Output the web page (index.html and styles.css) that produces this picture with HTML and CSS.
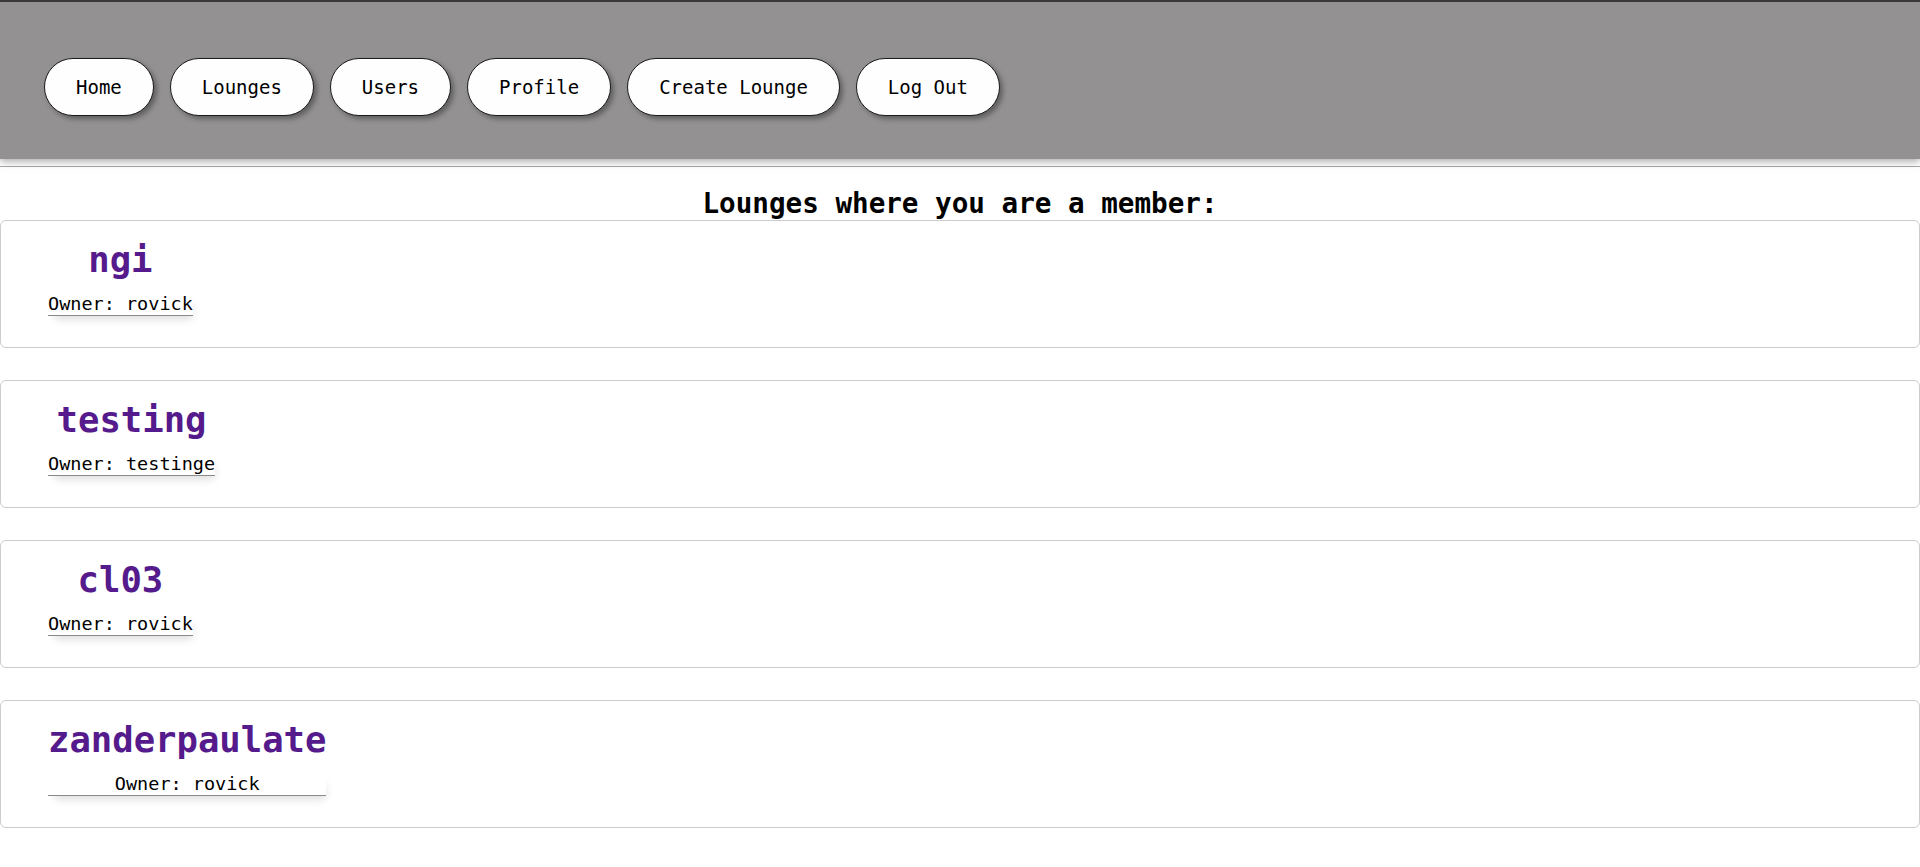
FILE: index.html
```html
<!DOCTYPE html>
<html lang="en">
<head>
<meta charset="utf-8">
<title>Lounges</title>
<link rel="stylesheet" href="styles.css">
</head>
<body>
<header class="topbar">
  <nav class="nav">
    <a class="nav-btn" href="#">Home</a>
    <a class="nav-btn" href="#">Lounges</a>
    <a class="nav-btn" href="#">Users</a>
    <a class="nav-btn" href="#">Profile</a>
    <a class="nav-btn" href="#">Create Lounge</a>
    <a class="nav-btn" href="#">Log Out</a>
  </nav>
</header>
<div class="divider"></div>
<main class="content">
  <h2 class="page-title">Lounges where you are a member:</h2>
  <section class="card">
    <div class="lounge">
      <a class="lounge-name" href="#">ngi</a>
      <div class="owner">Owner: rovick</div>
    </div>
  </section>
  <section class="card">
    <div class="lounge">
      <a class="lounge-name" href="#">testing</a>
      <div class="owner">Owner: testinge</div>
    </div>
  </section>
  <section class="card">
    <div class="lounge">
      <a class="lounge-name" href="#">cl03</a>
      <div class="owner">Owner: rovick</div>
    </div>
  </section>
  <section class="card">
    <div class="lounge">
      <a class="lounge-name" href="#">zanderpaulate</a>
      <div class="owner">Owner: rovick</div>
    </div>
  </section>
</main>
</body>
</html>
```

FILE: styles.css
```css
* {
  box-sizing: border-box;
}

html, body {
  margin: 0;
  padding: 0;
  background: #ffffff;
}

body {
  font-family: "DejaVu Sans Mono", "Liberation Mono", monospace;
  color: #000;
}

.topbar {
  background: #939192;
  border-top: 2px solid #3a3a3a;
  padding: 56px 44px 43px;
  box-shadow: 0 3px 7px rgba(0, 0, 0, 0.3);
  position: relative;
  z-index: 1;
}

.nav {
  display: flex;
  gap: 16px;
}

.nav-btn {
  display: inline-block;
  background: #fefefe;
  border: 1px solid #1a1a1a;
  border-radius: 30px;
  padding: 17px 31px;
  font-size: 19px;
  line-height: 22px;
  color: #000;
  text-decoration: none;
  box-shadow: 3px 3px 5px rgba(0, 0, 0, 0.35);
  white-space: nowrap;
}

.divider {
  margin-top: 7px;
  height: 0;
  border-top: 1px solid #a8a8a8;
  box-shadow: 0 3px 8px rgba(0, 0, 0, 0.07);
}

.content {
  padding-top: 21px;
}

.page-title {
  margin: 0;
  text-align: center;
  font-size: 27.6px;
  line-height: 32px;
  font-weight: bold;
}

.card {
  border: 1px solid #cccccc;
  border-radius: 6px;
  padding: 18px 47px 31px;
  margin-bottom: 32px;
}

.lounge {
  display: inline-block;
  text-align: center;
}

.lounge-name {
  display: block;
  color: #551a8b;
  font-weight: bold;
  font-size: 35.6px;
  line-height: 42px;
  text-decoration: none;
}

.owner {
  margin-top: 12px;
  font-size: 18.5px;
  line-height: 22px;
  border-bottom: 1px solid #8a8a8a;
  box-shadow: 3px 7px 9px -4px rgba(0, 0, 0, 0.14);
}
```
